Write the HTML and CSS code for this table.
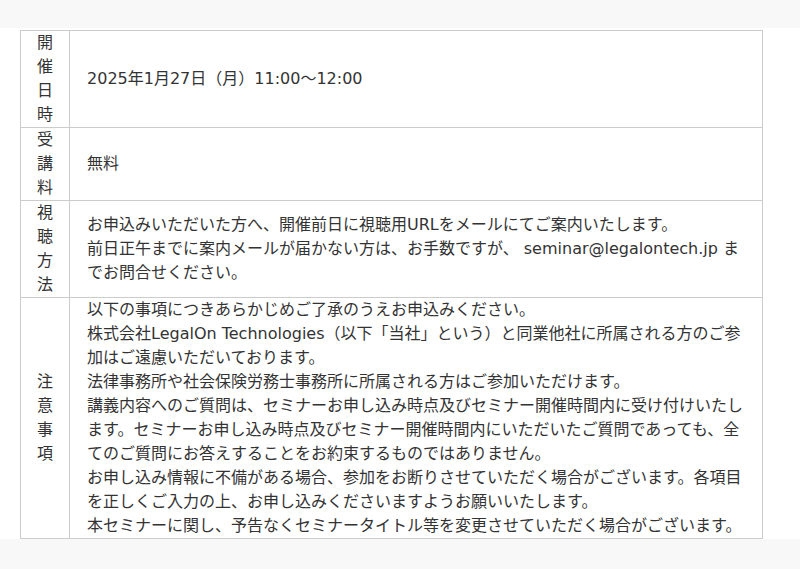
FILE: index.html
```html
<!DOCTYPE html>
<html lang="ja">
<head>
<meta charset="utf-8">
<link rel="stylesheet" href="styles.css">
</head>
<body>
<div class="band"></div>
<section class="sheet">
<table class="info">
<tr>
<th>開催日時</th>
<td>2025年1月27日（月）11:00〜12:00</td>
</tr>
<tr>
<th>受講料</th>
<td>無料</td>
</tr>
<tr>
<th>視聴方法</th>
<td>お申込みいただいた方へ、開催前日に視聴用URLをメールにてご案内いたします。<br>前日正午までに案内メールが届かない方は、お手数ですが、 seminar@legalontech.jp までお問合せください。</td>
</tr>
<tr>
<th>注意事項</th>
<td class="notes">以下の事項につきあらかじめご了承のうえお申込みください。<br>株式会社LegalOn Technologies（以下「当社」という）と同業他社に所属される方のご参加はご遠慮いただいております。<br>法律事務所や社会保険労務士事務所に所属される方はご参加いただけます。<br>講義内容へのご質問は、セミナーお申し込み時点及びセミナー開催時間内に受け付けいたします。セミナーお申し込み時点及びセミナー開催時間内にいただいたご質問であっても、全てのご質問にお答えすることをお約束するものではありません。<br>お申し込み情報に不備がある場合、参加をお断りさせていただく場合がございます。各項目を正しくご入力の上、お申し込みくださいますようお願いいたします。<br>本セミナーに関し、予告なくセミナータイトル等を変更させていただく場合がございます。</td>
</tr>
</table>
</section>
</body>
</html>
```
FILE: styles.css
```css
html, body {
  margin: 0;
  padding: 0;
  background: #f8f8f8;
}
body {
  font-family: "DejaVu Sans", "Noto Sans CJK JP", sans-serif;
  font-size: 16px;
  line-height: 24px;
  color: #333;
}
.band {
  height: 28px;
}
.sheet {
  background: #fff;
  padding: 2px 0 0 20px;
}
.info {
  border-collapse: collapse;
  width: 743px;
}
.info th,
.info td {
  border: 1px solid #ccc;
  vertical-align: middle;
}
.info th {
  width: 16px;
  padding: 0 16px;
  font-weight: normal;
  text-align: center;
}
.info td {
  padding: 0 17px;
  text-align: left;
}
```
